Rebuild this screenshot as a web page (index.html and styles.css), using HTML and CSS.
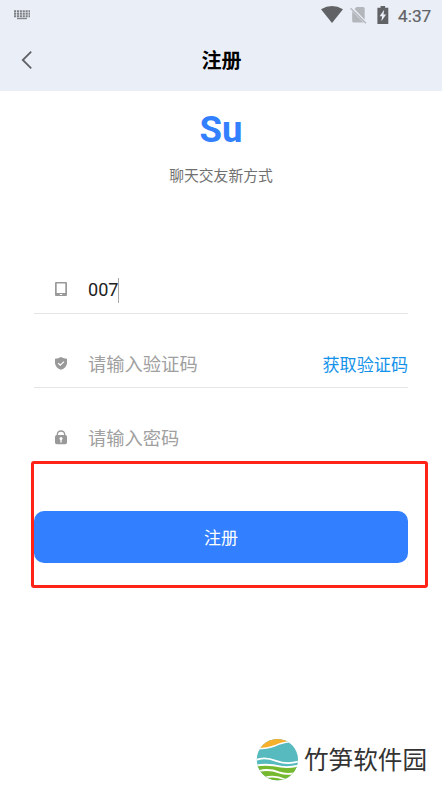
FILE: index.html
```html
<!DOCTYPE html>
<html lang="zh-CN">
<head>
<meta charset="utf-8">
<meta name="viewport" content="width=device-width, initial-scale=1">
<title>注册</title>
<link rel="stylesheet" href="styles.css">
</head>
<body>
<div class="screen">
  <header class="header">
    <div class="status">
      <svg class="keyboard" width="18" height="10" viewBox="0 0 18 10">
        <path d="M1 1.2H17M1 3.7H17M1 6.2H17" stroke="#7d8084" stroke-width="1.9" stroke-dasharray="2.1 .8"/>
        <path d="M4 8.5H14" stroke="#85888c" stroke-width="1.4"/>
      </svg>
      <div class="indicators">
        <svg width="22" height="17" viewBox="0 0 22 17"><path d="M0 3.2Q11-3.2 22 3.2L11 17Z" fill="#616265"/></svg>
        <svg class="sim" width="17" height="18" viewBox="0 0 17 18"><path d="M6.5 1H13.2Q14.7 1 14.7 2.5V13.7L4.6 3Z" fill="#b3b6bb"/><path d="M2.2 5.2L13.6 16.6H3.7Q2.2 16.6 2.2 15.1Z" fill="#b3b6bb"/><path d="M.6 2.2L15.9 17.3" stroke="#b3b6bb" stroke-width="1.3"/></svg>
        <svg class="battery" width="12" height="18" viewBox="0 0 12 18"><path d="M3.6 0H8.1V1.7H11.3V18H.4V1.7H3.6Z" fill="#616265"/><path d="M7.2 3.8L2.6 10.2H5.1L4.4 15.2L9.1 8.6H6.5Z" fill="#eaeef6"/></svg>
        <span class="clock">4:37</span>
      </div>
    </div>
    <nav class="nav">
      <svg width="12" height="20" viewBox="0 0 12 20"><path d="M10.2 1.6L1.8 10L10.2 18.4" fill="none" stroke="#606266" stroke-width="1.8"/></svg>
      <h1 class="title">注册</h1>
    </nav>
  </header>
  <main class="main">
    <div class="brand">Su</div>
    <p class="slogan">聊天交友新方式</p>
    <form class="form">
      <div class="field">
        <svg class="icon" width="14" height="16" viewBox="0 0 14 16"><path fill-rule="evenodd" d="M2 0H12Q13 0 13 1V13Q13 14 12 14H2Q1 14 1 13V1Q1 0 2 0ZM2.7 1.4V11H11.3V1.4ZM5.8 12V13H8.2V12Z" fill="#999"/></svg>
        <span class="value">007</span><span class="caret"></span>
      </div>
      <div class="field">
        <svg class="icon" width="14" height="16" viewBox="0 0 14 16"><path d="M7 .9Q9.8 2.7 13 2.7V7.2Q12.5 12.1 7 13.7Q1.5 12.1 1 7.2V2.7Q4.2 2.7 7 .9Z" fill="#999"/><path d="M4.2 7.2L6.3 9.2L10 5.6" fill="none" stroke="#fff" stroke-width="1.2"/></svg>
        <span class="placeholder">请输入验证码</span>
        <a class="code">获取验证码</a>
      </div>
      <div class="field last">
        <svg class="icon" width="14" height="16" viewBox="0 0 14 16"><path d="M3.3 7V4.8Q3.3 1 7 1T10.7 4.8V7" fill="none" stroke="#999" stroke-width="1.3"/><rect x="1" y="5" width="12" height="9.2" rx="1.8" fill="#999"/><path d="M7 12.4V9" stroke="#fff" stroke-width="1.3"/><circle cx="7" cy="8.5" r="1.5" fill="#fff"/></svg>
        <span class="placeholder">请输入密码</span>
      </div>
      <div class="submit">注册</div>
    </form>
  </main>
  <footer class="mark">
    <svg width="43" height="44" viewBox="0 0 43 44">
      <defs><clipPath id="disc"><circle cx="21.4" cy="21.6" r="20.6"/></clipPath></defs>
      <g clip-path="url(#disc)">
        <rect width="43" height="44" fill="#56babf"/>
        <path d="M0 10.5Q11 10.5 18 8Q24 5 32 3.2V0H0Z" fill="#f7b02b"/>
        <path d="M0 10.8Q11 11 19 7.8Q25 4.8 34 3.8" fill="none" stroke="#fff" stroke-width="1.5"/>
        <path d="M0 27.4Q13 25.6 25 28.7Q33 30 43 27.5V44H0Z" fill="#76b82e"/>
        <path d="M0 22C7 18.8 14 20.5 20 22.8Q31 27 43 23.4M0 27.4Q13 25.6 25 28.7Q33 30 43 27.5M3 33C11 31 17 32 23 34.4Q30 37 40 35M8 40Q18 36.5 29 41.5" fill="none" stroke="#fff" stroke-width="1.8"/>
      </g>
    </svg>
    <span class="mark-name">竹笋软件园</span>
  </footer>
  <div class="highlight"></div>
</div>
</body>
</html>
```
FILE: styles.css
```css
* { box-sizing: border-box; }
body {
  margin: 0;
  background: #fff;
  font-family: Roboto, "Noto Sans CJK SC", sans-serif;
}
.screen {
  position: relative;
  display: flex;
  flex-direction: column;
  height: 785px;
  overflow: hidden;
}
.header { height: 91px; background: #eaeef6; }
.status {
  display: flex;
  justify-content: space-between;
  height: 30px;
  padding: 0 10px 0 13px;
}
.keyboard { margin-top: 10px; }
.indicators { display: flex; align-items: flex-start; padding-top: 6px; }
.sim { margin-left: 7px; }
.battery { margin-left: 10px; }
.clock {
  width: 34px;
  margin-left: 9px;
  font-size: 17.3px;
  font-weight: 400;
  -webkit-text-stroke: .2px #616265;
  line-height: 20px;
  color: #616265;
}
.nav {
  display: grid;
  grid-template-columns: 12px 1fr 12px;
  align-items: center;
  height: 60px;
  padding: 0 20px 0 21px;
}
.title {
  margin: 0;
  padding-top: 2px;
  text-align: center;
  font-size: 20px;
  font-weight: 700;
  line-height: 30px;
  color: #000;
}
.main { padding: 0 34px; }
.brand {
  margin-top: 18px;
  text-align: center;
  font-size: 36.5px;
  font-weight: 700;
  line-height: 42px;
  color: #327fff;
}
.slogan {
  margin: 14px 0 0;
  text-align: center;
  font-size: 14.8px;
  line-height: 22px;
  color: #707070;
}
.form { margin-top: 54px; }
.field {
  display: flex;
  align-items: center;
  height: 74px;
  padding: 26px 0 0 20px;
  border-bottom: 1px solid #e5e5e5;
}
.field:first-child { height: 73px; }
.last { border-color: transparent; }
.icon { margin-right: 20px; }
.value { padding-bottom: 1px; font-size: 18.1px; color: #222; }
.caret { width: 1px; height: 25px; margin-left: -1px; background: #aaa; }
.placeholder { padding-top: 2px; font-size: 18.3px; line-height: 26px; color: #a0a0a0; }
.code { margin-left: auto; padding-top: 2px; font-size: 17.1px; line-height: 26px; color: #1492ea; }
.submit {
  height: 52px;
  margin-top: 49px;
  border-radius: 10px;
  background: #327fff;
  text-align: center;
  font-size: 17px;
  line-height: 54px;
  color: #fff;
}
.mark {
  display: flex;
  align-items: center;
  justify-content: flex-end;
  gap: 5px;
  margin-top: auto;
  padding: 0 15px 3px 0;
}
.mark-name { padding-top: 2px; font-size: 24.6px; line-height: 36px; color: #333; }
.highlight {
  position: absolute;
  left: 31px;
  top: 461px;
  width: 397px;
  height: 127px;
  border: 3px solid #ff2318;
  border-radius: 3px;
}
```
